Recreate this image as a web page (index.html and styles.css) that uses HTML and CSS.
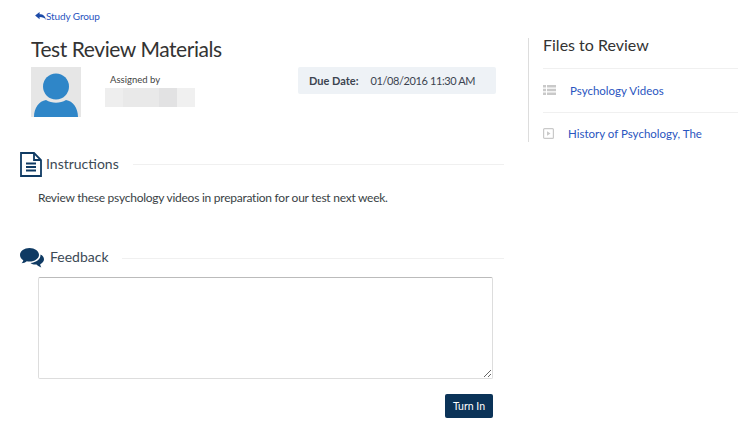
FILE: index.html
```html
<!DOCTYPE html>
<html lang="en">
<head>
<meta charset="utf-8">
<title>Test Review Materials</title>
<link rel="stylesheet" href="styles.css">
</head>
<body>
<div class="page">
  <main class="main">
    <a class="back" href="#">
      <svg class="back-icon" viewBox="0 0 12 10" aria-hidden="true"><path d="M0 4 5 0v2.400c4 0 6.500 2 7 6.600-1.300-2.600-3.400-3.400-7-3.400V8z"/></svg>
      <span>Study Group</span>
    </a>
    <h1 class="title">Test Review Materials</h1>
    <div class="meta">
      <div class="avatar">
        <svg viewBox="0 0 50 50" aria-hidden="true">
          <circle cx="25" cy="19.500" r="13" fill="#2f86c8"/>
          <path d="M3 50c0-9 5-16 12-17 6 3.500 14 3.500 20 0 7 1 12 8 12 17z" fill="#2f86c8"/>
        </svg>
      </div>
      <div class="assigned">
        <div class="assigned-label">Assigned by</div>
        <div class="redacted"><i></i><i></i><i></i><i></i></div>
      </div>
      <div class="due"><b>Due Date:</b><span>01/08/2016 11:30 AM</span></div>
    </div>

    <section class="instructions">
      <div class="section-head">
        <svg class="doc-icon" viewBox="0 0 22 25" aria-hidden="true">
          <path d="M1 1h13l7 7v16H1z" fill="#fff" stroke="#0f3a63" stroke-width="1.800"/>
          <path d="M14 1v7h7" fill="none" stroke="#0f3a63" stroke-width="1.800"/>
          <path d="M6 11.500h10M6 15h10M6 18.500h10" stroke="#0f3a63" stroke-width="1.900"/>
        </svg>
        <h2>Instructions</h2>
        <span class="rule"></span>
      </div>
      <p class="body-text">Review these psychology videos in preparation for our test next week.</p>
    </section>

    <section class="feedback">
      <div class="section-head head-fb">
        <svg class="chat-icon" viewBox="0 0 24 20" aria-hidden="true">
          <path d="M9.500 0C4.300 0 0 3 0 7c0 2.200 1.300 4 3.300 5.300C3 13.600 2.200 14.600 1.500 15.300c2 0 4-.8 5.300-2 .9.2 1.800.3 2.700.3 5.200 0 9.500-3 9.500-6.800S14.700 0 9.500 0z" fill="#0f3a63"/>
          <path d="M20.500 6.500c.3 4.500-4 8-10 8.500 1.800 1.400 3.800 1.800 6 1.500 1.300 1.300 3.200 2.500 5 3-.7-.8-1.200-2-1.300-3.300C22.500 15 24 13.300 24 11.200c0-2-1.400-3.700-3.500-4.700z" fill="#0f3a63"/>
        </svg>
        <h2>Feedback</h2>
        <span class="rule"></span>
      </div>
      <textarea class="answer"></textarea>
      <div class="actions"><button class="turn-in" type="button">Turn In</button></div>
    </section>
  </main>

  <aside class="side">
    <h2 class="side-title">Files to Review</h2>
    <div class="file file-first">
      <svg class="list-icon" viewBox="0 0 13 10" aria-hidden="true"><path d="M0 0h3v2.500H0zM4 0h9v2.500H4zM0 3.700h3v2.500H0zM4 3.700h9v2.500H4zM0 7.400h3V10H0zM4 7.400h9V10H4z" fill="#c9c9c9"/></svg>
      <a href="#">Psychology Videos</a>
    </div>
    <div class="file file-second">
      <svg class="play-icon" viewBox="0 0 11 11" aria-hidden="true"><rect x=".6" y=".6" width="9.800" height="9.800" rx="1" fill="#fff" stroke="#c9c9c9" stroke-width="1.200"/><path d="M4 3.200 7.500 5.500 4 7.800z" fill="#c9c9c9"/></svg>
      <a href="#">History of Psychology, The</a>
    </div>
  </aside>
</div>
</body>
</html>
```
FILE: styles.css
```css
* { box-sizing: border-box; }
html, body { margin: 0; background: #fff; }
body {
  font-family: "Lato", "Open Sans", "Liberation Sans", sans-serif;
  color: #333;
  width: 750px;
  height: 446px;
  overflow: hidden;
}
a { color: #2a55c0; text-decoration: none; }
.page { display: flex; align-items: flex-start; }
.main { width: 528px; flex: none; padding: 10px 24px 0 20px; }
.back { display: flex; align-items: center; gap: 0; margin-left: 15px; font-size: 10px; letter-spacing: -.1px; height: 12px; }
.back-icon { width: 11px; height: 9px; fill: #1c4aa8; }
.title { margin: 14px 0 0 11px; font-size: 21px; letter-spacing: -.43px; line-height: 26px; font-weight: 400; color: #333; }
.meta { display: flex; align-items: flex-start; margin: 5px 0 0 11px; height: 50px; }
.avatar { width: 50px; height: 50px; background: #e6e6e6; flex: none; }
.avatar svg { display: block; width: 50px; height: 50px; }
.assigned { margin-left: 24px; width: 193px; flex: none; padding-top: 6px; }
.assigned-label { font-size: 9.500px; line-height: 13px; margin-left: 5px; color: #444; }
.redacted { display: flex; width: 90px; height: 19px; margin-top: 2px; }
.redacted i { display: block; height: 100%; }
.redacted i:nth-child(1) { width: 18px; background: #eeeeee; }
.redacted i:nth-child(2) { width: 36px; background: #e9e9e9; }
.redacted i:nth-child(3) { width: 18px; background: #e2e2e3; }
.redacted i:nth-child(4) { width: 18px; background: #f0f0f0; }
.due {
  display: flex; align-items: center; gap: 12px;
  width: 198px; height: 27px; padding-left: 11px;
  background: #eef2f6; border-radius: 2px; font-size: 11px; color: #3c4450;
}
.due b { font-weight: 700; }
.due span { letter-spacing: -.4px; }
.instructions { margin-top: 35px; }
.section-head { display: flex; align-items: center; height: 25px; }
.doc-icon { width: 22px; height: 25px; flex: none; }
.section-head h2 { margin: 0 0 2px 4px; font-size: 14px; line-height: 20px; font-weight: 400; color: #3c4a56; }
.rule { flex: 1; height: 1px; background: #f0f0f0; margin-left: 14px; }
.head-fb { height: 20px; }
.chat-icon { width: 24px; height: 20px; flex: none; }
.head-fb h2 { margin: 0 0 2px 6px; }
.head-fb .rule { margin-left: 13px; }
.body-text { margin: 12px 0 0 18px; font-size: 12px; letter-spacing: -.25px; line-height: 17px; color: #3a3f45; }
.feedback { margin-top: 42px; }
.answer {
  display: block; width: 455px; height: 102px; margin: 9px 0 0 18px;
  border: 1px solid #ddd; border-top-color: #bbb; border-radius: 2px; background: #fff; resize: both;
}
.actions { width: 455px; margin: 15px 0 0 18px; display: flex; justify-content: flex-end; }
.turn-in {
  width: 48px; height: 24px; padding: 0; border: 0; border-radius: 2px;
  background: #0b3358; color: #fff; font: 400 10.500px "Lato", sans-serif;
}
.side { width: 210px; flex: none; margin-top: 38px; padding-left: 14px; border-left: 1px solid #ddd; height: 104px; }
.side-title { margin: 0; height: 32px; border-bottom: 1px solid #f0f0f0; font-size: 16px; line-height: 16px; font-weight: 400; color: #333; padding-top: 0; }
.side-title { margin-top: -1px; height: 32px; }
.file { display: flex; align-items: center; font-size: 11.500px; height: 44px; }
.file-first { gap: 14px; border-bottom: 1px solid #f0f0f0; }
.file-second { gap: 14px; height: 41px; }
.list-icon { width: 13px; height: 10px; flex: none; margin-bottom: 2px; }
.play-icon { width: 11px; height: 11px; flex: none; }
```
